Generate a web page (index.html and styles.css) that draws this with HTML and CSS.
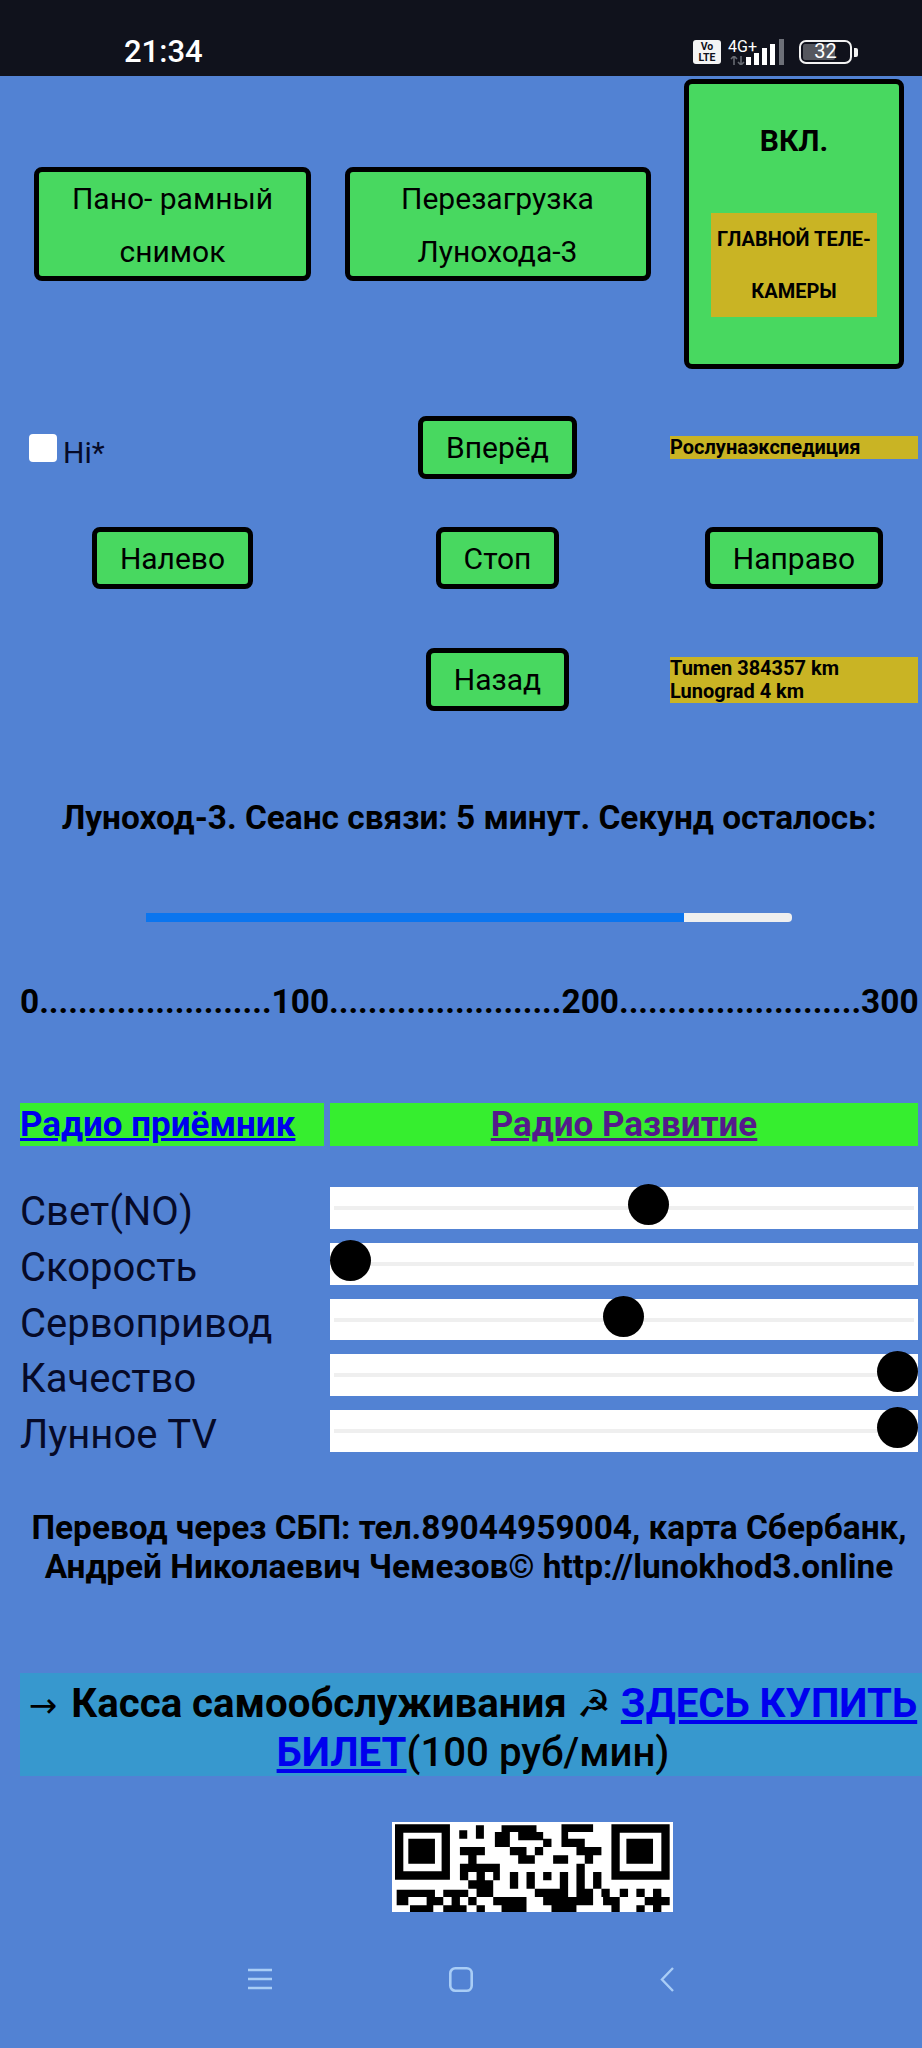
FILE: index.html
```html
<!DOCTYPE html>
<html lang="ru">
<head>
<meta charset="utf-8">
<title>Луноход-3</title>
<link rel="stylesheet" href="styles.css">
</head>
<body>
<header class="status">
  <span class="clock">21:34</span>
  <div class="sys">
    <span class="volte">Vo<br>LTE</span>
    <div class="net">
      <span class="net-type">4G+</span>
      <svg class="net-arrows" width="16" height="9" viewBox="0 0 16 9"><path d="M4 0v9M1 3l3-3 3 3M11 0v9M8 6l3 3 3-3" fill="none" stroke="#666a72" stroke-width="1.6"/></svg>
    </div>
    <svg class="signal" width="40" height="26" viewBox="0 0 40 26">
      <rect x="0" y="18" width="5" height="8" fill="#fff"/>
      <rect x="8" y="14" width="5" height="12" fill="#fff"/>
      <rect x="16" y="9" width="5" height="17" fill="#fff"/>
      <rect x="24" y="5" width="5" height="21" fill="#fff"/>
      <rect x="33" y="0" width="5" height="26" fill="#6d7078"/>
    </svg>
    <div class="battery"><span class="battery-fill"></span><span class="battery-num">32</span></div>
    <span class="battery-nub"></span>
  </div>
</header>

<main>
  <section class="row row-top">
    <button class="btn btn-pano">Пано- рамный<br>снимок</button>
    <button class="btn btn-reboot">Перезагрузка<br>Лунохода-3</button>
    <button class="btn btn-camera"><b class="cam-on">ВКЛ.</b><span class="cam-label">ГЛАВНОЙ ТЕЛЕ-<br>КАМЕРЫ</span></button>
  </section>

  <section class="row row-forward">
    <label class="hi"><span class="check"></span>Hi*</label>
    <button class="btn">Вперёд</button>
    <div class="note">Рослунаэкспедиция</div>
  </section>

  <section class="row row-stop">
    <button class="btn">Налево</button>
    <button class="btn">Стоп</button>
    <button class="btn">Направо</button>
  </section>

  <section class="row row-back">
    <span></span>
    <button class="btn">Назад</button>
    <div class="note">Tumen 384357 km<br>Lunograd 4 km</div>
  </section>

  <h1 class="session">Луноход-3. Сеанс связи: 5 минут. Секунд осталось:</h1>

  <div class="progress"><span class="progress-bar" style="width:83.3%"></span></div>

  <div class="scale">0........................100........................200.........................300</div>

  <nav class="radio">
    <a class="radio-link radio-left" href="#a">Радио приёмник</a>
    <a class="radio-link radio-right" href="#b">Радио Развитие</a>
  </nav>

  <section class="sliders">
    <div class="slider-row"><span class="slider-label">Свет(NO)</span><div class="slider"><i class="thumb" style="--v:54.5"></i></div></div>
    <div class="slider-row"><span class="slider-label">Скорость</span><div class="slider"><i class="thumb" style="--v:0"></i></div></div>
    <div class="slider-row"><span class="slider-label">Сервопривод</span><div class="slider"><i class="thumb" style="--v:49.9"></i></div></div>
    <div class="slider-row"><span class="slider-label">Качество</span><div class="slider"><i class="thumb" style="--v:100"></i></div></div>
    <div class="slider-row"><span class="slider-label">Лунное TV</span><div class="slider"><i class="thumb" style="--v:100"></i></div></div>
  </section>

  <p class="donate">Перевод через СБП: тел.89044959004, карта Сбербанк, Андрей Николаевич Чемезов© http://lunokhod3.online</p>

  <p class="cash"><span class="arrow">→</span> Касса самообслуживания <span class="sickle">☭</span> <a href="#c">ЗДЕСЬ КУПИТЬ БИЛЕТ</a><span class="price">(100 руб/мин)</span></p>

  <svg class="qr" width="281" height="90" viewBox="36 35 844 270" preserveAspectRatio="none">
    <rect x="36" y="35" width="844" height="270" fill="#fff"/>
    <path fill="#000" fill-rule="evenodd" d="M45 42H210V208H45ZM70 67V183H185V67ZM85 85H165V160H85ZM695 42H870V208H695ZM720 67V183H845V67ZM740 85H820V160H740Z"/>
    <path fill="#000" d="M238 60h24v25h-24ZM288 45h24v40h-24ZM365 45h105v20H365ZM345 65h45v45h-45ZM415 65h75v25h-75ZM490 85h25v25h-25ZM390 110h50v25h-50ZM415 135h50v25h-50ZM465 110h25v25h-25ZM545 42h95v23h-95ZM545 65h20v25h-20ZM545 85h70v25h-70ZM590 110h25v25h-25ZM615 110h50v25h-50ZM520 135h45v25h-45ZM615 135h25v25h-25ZM240 110h75v25h-75ZM265 135h25v25h-25ZM240 160h120v25H240ZM240 185h25v25h-25ZM290 185h25v25h-25ZM340 185h20v25h-20ZM265 210h75v25h-75ZM390 185h25v50h-25ZM440 185h25v50h-25ZM490 185h25v25h-25ZM540 185h25v50h-25ZM590 160h25v75h-25ZM640 185h25v50h-25ZM50 238h115v22H50ZM190 238h75v22h-75ZM290 235h50v25h-50ZM465 235h100v25H465ZM590 235h50v25h-50ZM665 235h25v25h-25ZM720 235h25v25h-25ZM770 235h25v25h-25ZM820 235h25v25h-25ZM50 260h35v25H50ZM140 260h50v25h-50ZM215 260h25v25h-25ZM265 260h25v25h-25ZM340 260h100v25H340ZM490 260h150v25H490ZM670 260h50v25h-50ZM795 260h75v25h-75ZM90 285h70v20H90ZM190 285h70v20h-70ZM290 285h25v20h-25ZM365 285h75v20h-75ZM515 285h75v20h-75ZM695 285h25v20h-25ZM770 285h25v20h-25ZM820 285h25v20h-25Z"/>
  </svg>
</main>

<footer class="navbar">
  <svg width="24" height="22" viewBox="0 0 24 22"><path d="M0 2h24M0 11h24M0 20h24" stroke="#a9cdf6" stroke-width="2.4" fill="none"/></svg>
  <svg width="24" height="25" viewBox="0 0 24 25"><rect x="1.3" y="1.3" width="21.4" height="22.4" rx="5" stroke="#a9cdf6" stroke-width="2.6" fill="none"/></svg>
  <svg class="nav-back" width="14" height="25" viewBox="0 0 14 25"><path d="M13 1L2 12.5 13 24" stroke="#a9cdf6" stroke-width="2.4" fill="none"/></svg>
</footer>
</body>
</html>
```

FILE: styles.css
```css
* { box-sizing: border-box; }
html, body { margin: 0; padding: 0; }
body {
  width: 922px;
  height: 2048px;
  overflow: hidden;
  background: #5282d3;
  color: #000;
  font-family: Roboto, "Liberation Sans", sans-serif;
}

/* status bar */
.status {
  height: 76px;
  background: #10121c;
  color: #fff;
  display: flex;
  justify-content: space-between;
  align-items: center;
  padding: 28px 64px 0 124px;
}
.clock { font-size: 31px; font-weight: 500; line-height: 48px; }
.sys { display: flex; align-items: center; height: 48px; }
.volte {
  width: 28px;
  height: 24px;
  background: #f4f4f4;
  color: #10121c;
  border-radius: 3px;
  font-size: 10.5px;
  font-weight: 700;
  line-height: 11px;
  text-align: center;
  padding-top: 1px;
}
.net { width: 30px; margin-left: 7px; display: flex; flex-direction: column; align-self: center; height: 27px; }
.net-type { font-size: 16px; line-height: 15px; height: 17px; white-space: nowrap; }
.net-arrows { margin-left: 2px; }
.signal { margin-left: -12px; }
.battery {
  position: relative;
  width: 53px;
  height: 24px;
  margin-left: 13px;
  border: 2.5px solid #f2f2f2;
  border-radius: 7px;
  text-align: center;
}
.battery-fill { position: absolute; left: 2px; top: 2px; bottom: 2px; width: 32px; background: #55575e; border-radius: 2px; }
.battery-num { position: relative; font-size: 20px; line-height: 19px; display: block; }
.battery-nub { width: 4px; height: 9px; margin-left: 2px; background: #f2f2f2; border-radius: 0 2px 2px 0; }

/* control rows */
.row {
  display: grid;
  grid-template-columns: 305px 335px 248px;
  column-gap: 5px;
  margin-left: 20px;
  align-items: center;
  justify-items: center;
}
.row-top { height: 290px; margin-top: 3px; }
.row-forward { height: 63px; margin-top: 47px; }
.row-stop { height: 62px; margin-top: 48px; }
.row-back { height: 63px; margin-top: 59px; }

.btn {
  height: 63px;
  padding: 0 23px;
  border: 5px solid #000;
  border-radius: 8px;
  background: #48d860;
  color: #000;
  font: 400 30px/53px Roboto, "Liberation Sans", sans-serif;
  white-space: nowrap;
  text-align: center;
}
.row-stop .btn { height: 62px; }
.btn-pano { width: 277px; height: 114px; padding: 0 0 6px; }
.btn-reboot { width: 306px; height: 114px; padding: 0 0 6px; }
.btn-camera {
  width: 220px;
  height: 290px;
  padding: 0;
  display: flex;
  flex-direction: column;
  align-items: center;
}
.cam-on { margin-top: 30px; font-size: 30px; font-weight: 700; line-height: 53px; }
.cam-label {
  margin-top: 46px;
  width: 166px;
  height: 104px;
  background: #c9b424;
  font-size: 20px;
  font-weight: 700;
  line-height: 52px;
}

.hi {
  justify-self: start;
  display: flex;
  align-items: center;
  margin-left: 9px;
  padding-top: 10px;
  font-size: 30px;
  line-height: 33px;
  color: #060a28;
}
.check {
  width: 28px;
  height: 28px;
  background: #fff;
  border-radius: 4px;
  margin-right: 6px;
  margin-top: -10px;
}
.note {
  width: 248px;
  background: #c9b424;
  font-size: 20px;
  font-weight: 700;
  line-height: 23px;
}

/* session */
.session {
  margin: 90px 0 0 0;
  padding-left: 16px;
  text-align: center;
  font-size: 33.4px;
  font-weight: 700;
  line-height: 33px;
  white-space: nowrap;
}
.progress {
  width: 646px;
  height: 9px;
  margin: 79px 0 0 146px;
  background: #efefef;
  border-radius: 0 4px 4px 0;
  overflow: hidden;
}
.progress-bar { display: block; height: 100%; background: #0a75ef; }
.scale {
  margin: 63px 0 0 20px;
  font-size: 33.4px;
  font-weight: 700;
  line-height: 33px;
  white-space: nowrap;
}

/* radio */
.radio {
  display: grid;
  grid-template-columns: 304px 588px;
  column-gap: 6px;
  margin: 85px 0 0 20px;
}
.radio-link {
  height: 43px;
  background: #36ee2f;
  font-size: 35px;
  font-weight: 700;
  line-height: 43px;
  white-space: nowrap;
}
.radio-left { color: #0000ee; }
.radio-right { color: #551a8b; text-align: center; }

/* sliders */
.sliders { display: flex; flex-direction: column; gap: 14px; margin: 41px 0 0 20px; }
.slider-row {
  display: grid;
  grid-template-columns: 304px 588px;
  grid-template-rows: 41.8px;
  column-gap: 6px;
  height: 41.8px;
  align-items: start;
}
.slider-label { font-size: 40px; line-height: 42px; color: #060a28; margin-top: 4px; white-space: nowrap; }
.slider { position: relative; height: 41.8px; background: #fff; }
.slider::before {
  content: "";
  position: absolute;
  left: 4px;
  right: 4px;
  top: 19px;
  height: 4px;
  background: #efefef;
}
.thumb {
  position: absolute;
  top: -3px;
  left: calc((100% - 41px) * var(--v) / 100);
  width: 41px;
  height: 41px;
  border-radius: 50%;
  background: #000;
}

/* donate */
.donate {
  width: 890px;
  margin: 56px 0 0 24px;
  text-align: center;
  font-size: 33.4px;
  font-weight: 700;
  line-height: 39px;
}
.cash {
  width: 902px;
  height: 103px;
  margin: 87px 0 0 20px;
  padding: 6px 0 0 4px;
  background: #3798ce;
  text-align: center;
  font-size: 40.2px;
  font-weight: 700;
  line-height: 49px;
}
.cash a { color: #0000ee; }
.price { font-weight: 500; }
.arrow, .sickle { font-family: "DejaVu Sans", sans-serif; font-weight: 400; line-height: 1; }
.arrow { font-size: 34px; margin-right: 4px; }
.sickle { font-size: 38px; }

/* qr */
.qr { display: block; margin: 46px 0 0 392px; }

/* android nav */
.navbar {
  display: flex;
  align-items: center;
  column-gap: 177px;
  margin: 55px 0 0 248px;
}
.nav-back { margin-left: 10px; }
```
